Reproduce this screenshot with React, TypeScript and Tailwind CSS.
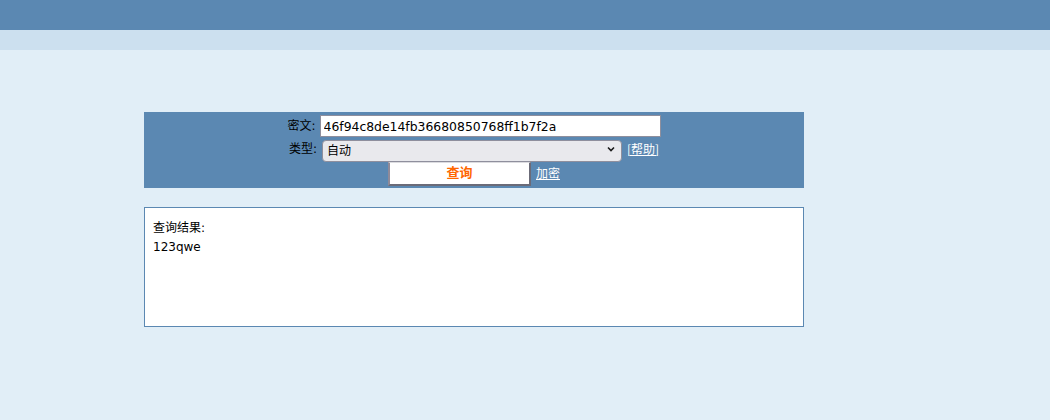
import { useState } from 'react';

export default function App() {
  const [cipher, setCipher] = useState('46f94c8de14fb36680850768ff1b7f2a');
  const [type, setType] = useState('auto');

  return (
    <div
      className="w-full h-[420px] bg-[#e1eef7] text-black"
      style={{ fontFamily: '"DejaVu Sans", Verdana, "Noto Sans CJK SC", sans-serif' }}
    >
      {/* header bands */}
      <div className="h-[30px] bg-[#5b88b2]" />
      <div className="h-[20px] bg-[#cce0ef]" />

      <div className="w-[660px] ml-[144px] mt-[62px]">
        {/* query form */}
        <div className="bg-[#5b88b2] h-[76px] pt-[3px] flex flex-col">
          <div className="flex justify-center items-center h-[22px]">
            <span className="text-[12px] mr-[4px]">密文:</span>
            <input
              value={cipher}
              onChange={e => setCipher(e.target.value)}
              className="w-[341px] h-[22px] bg-white border border-[#8f8f9d] px-[3px] text-[12.4px] outline-none"
            />
          </div>
          <div className="flex justify-center items-center h-[23px]">
            <span className="text-[12px] mr-[5px]">类型:</span>
            <div className="relative w-[300px] h-[22px]">
              <select
                value={type}
                onChange={e => setType(e.target.value)}
                className="appearance-none w-full h-full bg-[#e9e9ed] border border-[#8f8f9d] rounded-[4px] pl-[4px] text-[12px] outline-none"
              >
                <option value="auto">自动</option>
                <option value="md5">md5</option>
                <option value="sha1">sha1</option>
              </select>
              <svg
                className="absolute right-[6px] top-[7px] pointer-events-none"
                width="10"
                height="8"
                viewBox="0 0 10 8"
              >
                <path d="M2 2.5 L5 5.5 L8 2.5" fill="none" stroke="#1a1a1a" strokeWidth="1.6" />
              </svg>
            </div>
            <a
              href="#"
              className="text-[12px] text-white underline ml-[5px]"
              style={{ fontFamily: '"Noto Sans CJK SC", sans-serif' }}
            >
              [帮助]
            </a>
          </div>
          <div className="flex justify-center items-center h-[26px] pt-[1px]">
            <button className="w-[143px] h-[24px] bg-white border-t border-l-2 border-r-2 border-b-2 border-t-[#dcdce0] border-l-[#8f8a99] border-r-[#6b6b78] border-b-[#6b6b78] text-[#ff6600] font-bold text-[13px]">
              查询
            </button>
            <a href="#" className="text-[12px] text-white underline ml-[5px]">
              加密
            </a>
          </div>
        </div>

        {/* result */}
        <div className="mt-[19px] h-[120px] bg-white border border-[#5b88b2] px-[8px] pt-[11px] text-[12px] leading-[19px]">
          <div>查询结果:</div>
          <div>123qwe</div>
        </div>
      </div>
    </div>
  );
}
